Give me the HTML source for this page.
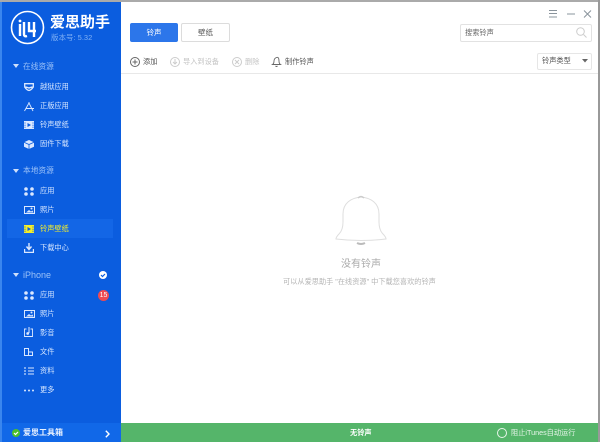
<!DOCTYPE html>
<html><head><meta charset="utf-8"><style>
html,body{margin:0;padding:0;width:600px;height:442px;overflow:hidden;background:#fff;font-family:"Liberation Sans","Noto Sans CJK SC",sans-serif}
.a{position:absolute}
.t{position:absolute;font-size:7.2px;line-height:10px;white-space:nowrap}
.s{color:#d6e6ff}
svg{position:absolute;overflow:visible}
</style></head><body>
<div class="a" style="left:0;top:0;width:600px;height:2px;background:#aaa"></div>
<div class="a" style="left:598px;top:0;width:2px;height:442px;background:#999"></div>
<div class="a" style="left:0;top:2px;width:2px;height:440px;background:#3a86ee"></div>
<div class="a" style="left:2px;top:2px;width:119px;height:440px;background:#0b5ddf"></div>
<div class="a" style="left:7px;top:219px;width:106px;height:19px;background:#1366e6"></div>
<div class="a" style="left:2px;top:423px;width:119px;height:19px;background:#1168e8"></div>
<div class="a" style="left:121px;top:423px;width:477px;height:19px;background:#55b56a"></div>
<div class="a" style="left:121px;top:73px;width:477px;height:1px;background:#e8e8e8"></div>

<svg style="left:10px;top:10px" width="35" height="35"><circle cx="17.500" cy="17.500" r="16" fill="none" stroke="#fff" stroke-width="1.600"/><path d="M10 14v12M14 12v12q0 3 3 2M19 12v9h7M24 12v15" fill="none" stroke="#fff" stroke-width="2.400"/><circle cx="10" cy="11" r="1.400" fill="#fff"/></svg>
<div class="t" style="left:50px;top:15px;font-size:15px;line-height:16px;color:#fff;font-weight:bold">爱思助手</div>
<div class="t" style="left:51px;top:33px;color:#7fb0f5;font-size:7.500px">版本号: 5.32</div>

<svg style="left:13px;top:64px" width="6" height="5"><path d="M0 0h6L3 4z" fill="#cfe0fb"/></svg>
<div class="t" style="left:23px;top:62px;color:#9cc2f8;font-size:7.700px">在线资源</div>
<div class="t s" style="left:40px;top:82px">越狱应用</div>
<div class="t s" style="left:40px;top:101px">正版应用</div>
<div class="t s" style="left:40px;top:120px">铃声壁纸</div>
<div class="t s" style="left:40px;top:139px">固件下载</div>
<svg style="left:24px;top:83px" width="10" height="8"><path d="M.7.700h8.600v3.300q-2 3-4.300 3.500Q2.700 7 .7 4zM.7 3.500l4.300 1.500 4.300-1.500" fill="none" stroke="#dbe8ff" stroke-width="1.300"/></svg>
<svg style="left:24px;top:102px" width="10" height="9"><path d="M.5 9L5 1l4 8M2 6.500h8M5 0v2" fill="none" stroke="#dbe8ff" stroke-width=".9"/></svg>
<svg style="left:24px;top:121px" width="10" height="8"><path d="M0 0h10v8H0z" fill="#dbe8ff"/><path d="M3.500 2l3.500 2-3.500 2z" fill="#0b5ddf"/><path d="M1 1.500v1M1 3.700v1M1 5.800v1M9 1.500v1M9 3.700v1M9 5.800v1" stroke="#0b5ddf"/></svg>
<svg style="left:24px;top:140px" width="10" height="9"><path d="M5 0l5 2.200v4.600L5 9 0 6.800V2.200z" fill="#dbe8ff"/><path d="M0 2.200l5 2.300 5-2.300M5 4.500V9" fill="none" stroke="#0b5ddf" stroke-width=".8"/></svg>

<svg style="left:13px;top:169px" width="6" height="5"><path d="M0 0h6L3 4z" fill="#cfe0fb"/></svg>
<div class="t" style="left:23px;top:166px;color:#9cc2f8;font-size:7.700px">本地资源</div>
<div class="t s" style="left:40px;top:186px">应用</div>
<div class="t s" style="left:40px;top:205px">照片</div>
<div class="t" style="left:40px;top:224px;color:#f4ee2a">铃声壁纸</div>
<div class="t s" style="left:40px;top:243px">下载中心</div>
<svg style="left:24px;top:187px" width="10" height="9" fill="#dbe8ff"><circle cx="2" cy="2" r="1.800"/><circle cx="8" cy="2" r="1.800"/><circle cx="2" cy="7" r="1.800"/><circle cx="8" cy="7" r="1.800"/></svg>
<svg style="left:24px;top:206px" width="11" height="8"><path d="M.5.500h10v7H.5z" fill="none" stroke="#dbe8ff"/><path d="M2 6.500l3-2.500 2 1.500 1.500-1 1 2z" fill="#dbe8ff"/><circle cx="7.500" cy="2.500" r="1" fill="#dbe8ff"/></svg>
<svg style="left:24px;top:225px" width="10" height="8"><path d="M0 0h10v8H0z" fill="#f4ee2a"/><path d="M3.500 2l3.500 2-3.500 2z" fill="#0b5ddf"/><path d="M1 1.500v1M1 3.700v1M1 5.800v1M9 1.500v1M9 3.700v1M9 5.800v1" stroke="#0b5ddf"/></svg>
<svg style="left:24px;top:243px" width="10" height="10"><path d="M5 0v6M2.500 3.500L5 6.500l2.500-3" fill="none" stroke="#dbe8ff" stroke-width="1.400"/><path d="M.6 6v3.400h8.800V6" fill="none" stroke="#dbe8ff" stroke-width="1.200"/></svg>

<svg style="left:13px;top:273px" width="6" height="5"><path d="M0 0h6L3 4z" fill="#cfe0fb"/></svg>
<div class="t" style="left:23px;top:270px;color:#9cc2f8;font-size:9px">iPhone</div>
<svg style="left:99px;top:271px" width="8" height="8"><circle cx="4" cy="4" r="4" fill="#fff"/><path d="M2 4l1.500 1.500L6 3" fill="none" stroke="#0b5ddf" stroke-width="1.200"/></svg>
<div class="t s" style="left:40px;top:290px">应用</div>
<svg style="left:24px;top:291px" width="10" height="9" fill="#dbe8ff"><circle cx="2" cy="2" r="1.800"/><circle cx="8" cy="2" r="1.800"/><circle cx="2" cy="7" r="1.800"/><circle cx="8" cy="7" r="1.800"/></svg>
<div class="a" style="left:98px;top:290px;width:11px;height:11px;border-radius:50%;background:#ef4a52;color:#fff;font-size:7px;line-height:11px;text-align:center">15</div>
<div class="t s" style="left:40px;top:309px">照片</div>
<svg style="left:24px;top:310px" width="11" height="8"><path d="M.5.500h10v7H.5z" fill="none" stroke="#dbe8ff"/><path d="M2 6.500l3-2.500 2 1.500 1.500-1 1 2z" fill="#dbe8ff"/><circle cx="7.500" cy="2.500" r="1" fill="#dbe8ff"/></svg>
<div class="t s" style="left:40px;top:328px">影音</div>
<svg style="left:24px;top:327px" width="9" height="10"><path d="M2.500 2H.5v7.500h8V2h-2" fill="none" stroke="#dbe8ff" stroke-width=".9"/><path d="M5 0v6" stroke="#dbe8ff"/><circle cx="3.700" cy="6.500" r="1.400" fill="#dbe8ff"/></svg>
<div class="t s" style="left:40px;top:347px">文件</div>
<svg style="left:24px;top:348px" width="9" height="8"><path d="M.5 7.500V.5h4v7zM4.500 4h4v3.500h-4" fill="none" stroke="#dbe8ff" stroke-width="1"/></svg>
<div class="t s" style="left:40px;top:366px">资料</div>
<svg style="left:24px;top:367px" width="10" height="8"><path d="M4 1h6M4 4h6M4 7h6M1 0v2M1 3v2M1 6v2" stroke="#dbe8ff" stroke-width="1.100"/></svg>
<div class="t s" style="left:40px;top:385px">更多</div>
<svg style="left:24px;top:389px" width="10" height="3" fill="#dbe8ff"><circle cx="1" cy="1.500" r="1"/><circle cx="5" cy="1.500" r="1"/><circle cx="9" cy="1.500" r="1"/></svg>

<svg style="left:12px;top:429px" width="8" height="8"><circle cx="4" cy="4" r="4" fill="#4cc02a"/><path d="M2 4l1.500 1.500L6 3" fill="none" stroke="#fff" stroke-width="1.200"/></svg>
<div class="t" style="left:23px;top:428px;color:#e8f1ff;font-weight:bold;font-size:8px">爱思工具箱</div>
<svg style="left:105px;top:430px" width="5" height="8"><path d="M.8.800L4 4 .8 7.200" fill="none" stroke="#fff" stroke-width="1.400"/></svg>

<div class="a" style="left:130px;top:23px;width:48px;height:19px;background:#2c76ea;border-radius:2px;color:#fff;font-size:7.500px;line-height:19px;text-align:center">铃声</div>
<div class="a" style="left:181px;top:23px;width:47px;height:17px;border:1px solid #dcdcdc;border-radius:2px;color:#555;font-size:7.500px;line-height:17px;text-align:center">壁纸</div>

<svg style="left:549px;top:10px" width="42" height="8"><path d="M0 .5h8M0 3.500h8M0 7h8M18 4h8M35 .5l7 7M42 .5l-7 7" stroke="#8a949c" fill="none"/></svg>
<div class="a" style="left:460px;top:24px;width:130px;height:16px;border:1px solid #e2e2e2;border-radius:2px"></div>
<div class="t" style="left:465px;top:28px;color:#666">搜索铃声</div>
<svg style="left:576px;top:27px" width="11" height="11"><circle cx="4.500" cy="4.500" r="3.800" fill="none" stroke="#ccc"/><path d="M7.500 7.500l3 3" stroke="#ccc"/></svg>

<svg style="left:130px;top:57px" width="10" height="10"><circle cx="5" cy="5" r="4.500" fill="none" stroke="#666"/><path d="M2.500 5h5M5 2.500v5" stroke="#666"/></svg>
<div class="t" style="left:143px;top:57px;color:#555">添加</div>
<svg style="left:170px;top:57px" width="10" height="10"><circle cx="5" cy="5" r="4.500" fill="none" stroke="#ccc"/><path d="M5 2v5M3 5l2 2 2-2" fill="none" stroke="#ccc"/></svg>
<div class="t" style="left:183px;top:57px;color:#c4c4c4">导入到设备</div>
<svg style="left:232px;top:57px" width="10" height="10"><circle cx="5" cy="5" r="4.500" fill="none" stroke="#ccc"/><path d="M3 3l4 4M7 3l-4 4" stroke="#ccc"/></svg>
<div class="t" style="left:245px;top:57px;color:#c4c4c4">删除</div>
<svg style="left:272px;top:57px" width="9" height="10"><path d="M.5 7.500Q2 6.500 2 4T4.500.5 7 4q0 2.500 1.500 3.500zM3.500 9q1 1 2 0" fill="none" stroke="#666" stroke-width=".9"/></svg>
<div class="t" style="left:285px;top:57px;color:#555">制作铃声</div>
<div class="a" style="left:537px;top:53px;width:53px;height:15px;border:1px solid #e6e6e6;border-radius:2px"></div>
<div class="t" style="left:542px;top:56px;color:#555">铃声类型</div>
<svg style="left:582px;top:59px" width="6" height="4"><path d="M0 0h6L3 3.500z" fill="#666"/></svg>

<svg style="left:335px;top:194px" width="52" height="52"><path d="M1 45q0-2 3-5 4-4 4-12V20C8 9 16 4 26 3c10 1 18 6 18 17v8q0 8 4 12 3 3 3 5-25 3-50 0z" fill="#fff" stroke="#dedede"/><path d="M23 4q3-3 6 0" fill="none" stroke="#ccc" stroke-width="1.500"/><path d="M22 49q4 2 8 0" fill="none" stroke="#bbb" stroke-width="2"/></svg>
<div class="t" style="left:341px;top:258px;font-size:10px;line-height:13px;color:#aaa">没有铃声</div>
<div class="t" style="left:283px;top:277px;color:#b4b4b4;font-size:7.200px">可以从爱思助手 "在线资源" 中下载您喜欢的铃声</div>

<div class="t" style="left:350px;top:428px;color:#fff;font-weight:bold">无铃声</div>
<svg style="left:497px;top:428px" width="10" height="10"><circle cx="5" cy="5" r="4.500" fill="none" stroke="#e8f5ea"/></svg>
<div class="t" style="left:511px;top:428px;color:#e8f5ea">阻止iTunes自动运行</div>
</body></html>
